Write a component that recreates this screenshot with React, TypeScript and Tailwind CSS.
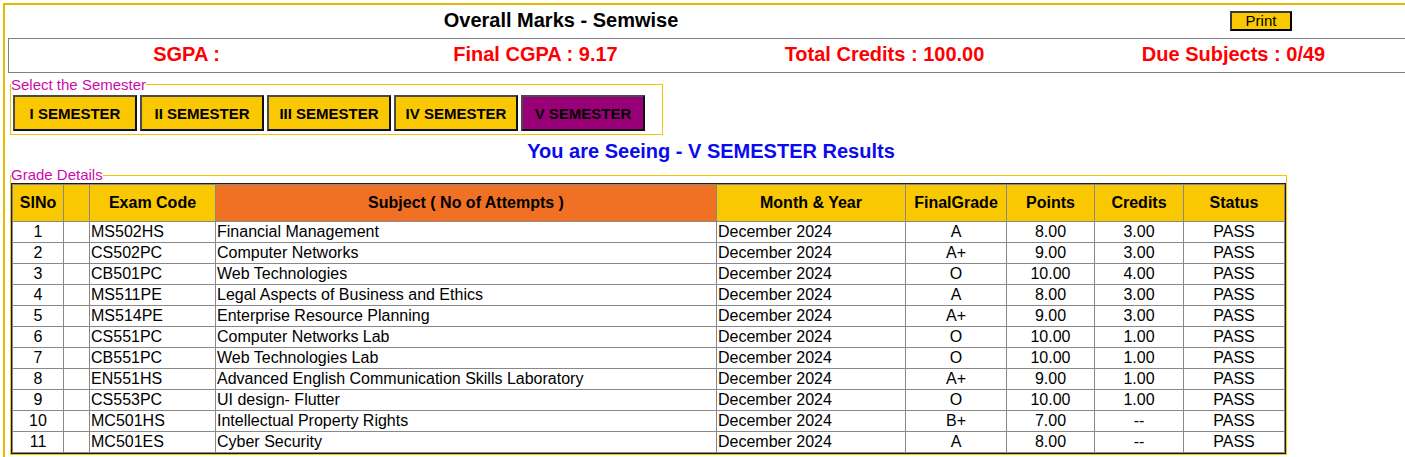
import React from "react";

const rows: [string, string, string, string, string, string, string][] = [
  ["1", "MS502HS", "Financial Management", "A", "8.00", "3.00", "PASS"],
  ["2", "CS502PC", "Computer Networks", "A+", "9.00", "3.00", "PASS"],
  ["3", "CB501PC", "Web Technologies", "O", "10.00", "4.00", "PASS"],
  ["4", "MS511PE", "Legal Aspects of Business and Ethics", "A", "8.00", "3.00", "PASS"],
  ["5", "MS514PE", "Enterprise Resource Planning", "A+", "9.00", "3.00", "PASS"],
  ["6", "CS551PC", "Computer Networks Lab", "O", "10.00", "1.00", "PASS"],
  ["7", "CB551PC", "Web Technologies Lab", "O", "10.00", "1.00", "PASS"],
  ["8", "EN551HS", "Advanced English Communication Skills Laboratory", "A+", "9.00", "1.00", "PASS"],
  ["9", "CS553PC", "UI design- Flutter", "O", "10.00", "1.00", "PASS"],
  ["10", "MC501HS", "Intellectual Property Rights", "B+", "7.00", "--", "PASS"],
  ["11", "MC501ES", "Cyber Security", "A", "8.00", "--", "PASS"],
];

const semesters = ["I SEMESTER", "II SEMESTER", "III SEMESTER", "IV SEMESTER", "V SEMESTER"];

export default function App() {
  return (
    <div
      className="w-[1405px] h-[457px] overflow-hidden bg-white text-black"
      style={{ fontFamily: '"Liberation Sans", Arial, sans-serif' }}
    >
      <div className="ml-[3px] mt-[3px] w-[1416px] border-2 border-[#e6b800] pb-6">
        {/* Title row */}
        <div className="flex h-[33px] items-start">
          <div className="w-[1112px] pt-[4px] text-center text-[20px] font-bold leading-[23px]">
            Overall Marks - Semwise
          </div>
          <button className="ml-[113px] mt-[6px] h-[20px] w-[62px] border-2 border-[#3a3a3a] border-b-black border-r-black bg-[#f9c800] text-[15px] leading-[16px] text-black">
            Print
          </button>
        </div>

        {/* Summary row */}
        <div className="ml-[3px] flex h-[35px] w-[1404px] items-center border border-[#808080] pb-[2px] pl-[3px]">
          {["SGPA :", "Final CGPA : 9.17", "Total Credits : 100.00", "Due Subjects : 0/49"].map((t) => (
            <div key={t} className="w-[349px] shrink-0 text-center text-[20px] font-bold leading-[23px] text-[#ff0000]">
              {t}
            </div>
          ))}
        </div>

        {/* Semester selector */}
        <fieldset className="ml-[5px] mt-[3px] w-[653px] border border-[#f5c400] pb-[3px]">
          <legend className="text-[15px] leading-[17px] text-[#cc0aa8]">Select the Semester</legend>
          <div className="flex gap-[3px] pl-[2px] pt-[2px]">
            {semesters.map((s, i) => (
              <button
                key={s}
                className={`h-[36px] w-[124px] border-2 border-[#4a4a4a] border-b-[#111] border-r-[#111] pt-[2px] text-[15px] font-bold leading-[18px] text-black ${
                  i === 4 ? "bg-[#990077]" : "bg-[#f9c800]"
                }`}
              >
                {s}
              </button>
            ))}
          </div>
        </fieldset>

        <div className="h-[32px] text-center text-[20px] font-bold leading-[32px] text-[#0a0af0]">
          You are Seeing - V SEMESTER Results
        </div>

        {/* Grade details */}
        <fieldset className="ml-[5px] w-[1277px] border border-[#f5c400]">
          <legend className="text-[15px] leading-[16px] text-[#cc0aa8]">Grade Details</legend>
          <div className="border border-[#1a1a1a]">
            <div className="grid grid-cols-[50px_25px_125px_500px_188px_100px_87px_88px_100px] gap-px bg-[#888888] p-px text-[16px]">
              {[
                "SlNo",
                "",
                "Exam Code",
                "Subject ( No of Attempts )",
                "Month & Year",
                "FinalGrade",
                "Points",
                "Credits",
                "Status",
              ].map((h, i) => (
                <div
                  key={i}
                  className={`flex h-[36px] items-center justify-center font-bold leading-[20px] ${
                    i === 3 ? "bg-[#f17124]" : "bg-[#f9c800]"
                  }`}
                >
                  {h}
                </div>
              ))}
              {rows.map((r) => (
                <React.Fragment key={r[0]}>
                  <div className="h-[20px] bg-white text-center leading-[20px]">{r[0]}</div>
                  <div className="h-[20px] bg-white" />
                  <div className="h-[20px] bg-white pl-[1px] leading-[20px] whitespace-nowrap">{r[1]}</div>
                  <div className="h-[20px] bg-white pl-[1px] leading-[20px] whitespace-nowrap">{r[2]}</div>
                  <div className="h-[20px] bg-white pl-[1px] leading-[20px] whitespace-nowrap">December 2024</div>
                  <div className="h-[20px] bg-white text-center leading-[20px]">{r[3]}</div>
                  <div className="h-[20px] bg-white text-center leading-[20px]">{r[4]}</div>
                  <div className="h-[20px] bg-white text-center leading-[20px]">{r[5]}</div>
                  <div className="h-[20px] bg-white text-center leading-[20px]">{r[6]}</div>
                </React.Fragment>
              ))}
            </div>
          </div>
        </fieldset>
      </div>
    </div>
  );
}
